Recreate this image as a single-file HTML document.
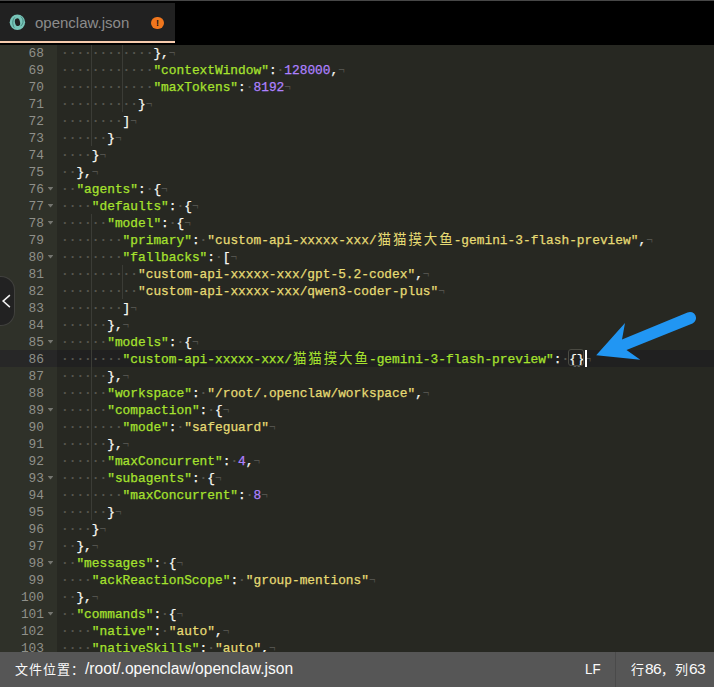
<!DOCTYPE html>
<html lang="zh-CN">
<head>
<meta charset="utf-8">
<title>openclaw.json</title>
<style>
*{box-sizing:border-box;margin:0;padding:0}
html,body{width:714px;height:687px;overflow:hidden;background:#272822}
body{position:relative;font-family:"Liberation Sans","Noto Sans CJK SC",sans-serif}
#tabs{position:absolute;left:0;top:0;width:714px;height:45px;background:#000;border-top:1px solid #474747;z-index:5}
#tab{position:absolute;left:0;top:2px;width:175px;height:40px;background:#212121;border-bottom:2px solid #f7ccae}
#tab .ico{position:absolute;left:9px;top:11px;width:17px;height:17px;overflow:visible}
#tab .name{position:absolute;left:35px;top:1px;height:38px;line-height:38px;font-size:15px;color:#8c8c8c;white-space:nowrap}
#tab .warn{position:absolute;left:151.1px;top:13.6px;width:12.6px;height:12.6px;border-radius:50%;background:#f0761d;color:#161616;font-size:9px;font-weight:bold;line-height:12.6px;text-align:center}
#ed{position:absolute;left:0;top:44px;width:714px;height:608px;background:#272822;overflow:hidden;font-family:"Liberation Mono","Noto Sans CJK SC",monospace;font-size:12.83px;line-height:19px}
#gut{position:absolute;left:0;top:0;width:57px;height:608px;background:#2f3129;color:#8f908a}
.gl{position:relative;height:17px;overflow:hidden;padding-right:13px;text-align:right;white-space:pre}
.gl.act{background:#272727}
.fw{position:absolute;left:47.6px;top:7px;width:5.8px;height:3.5px;background:#74756f;clip-path:polygon(0 0,100% 0,50% 100%)}
#code{position:absolute;left:57px;top:0;width:657px;height:608px;color:#f8f8f2}
.cl{height:17px;overflow:hidden;padding-left:4px;white-space:pre}
.cl.act{background:#202020}
.cl span{display:inline-block;height:19px;vertical-align:top}
.iv{color:#56564f;font-weight:bold}
.eol{color:#52524d;font-size:11px}
.ig{box-shadow:inset -1px 0 0 #3b3c36}
.k,.s,.n,.p{-webkit-text-stroke:.25px}
.k{color:#a6e22e}
.s{color:#e6db74}
.n{color:#ae81ff}
.p{color:#f8f8f2}
.cl .cj{width:77px;letter-spacing:1.9px;text-indent:.95px;overflow:hidden;font-family:"Liberation Mono","Noto Sans CJK SC",monospace;font-size:13.5px;font-weight:400;-webkit-text-stroke:0}
#cursor{position:absolute;left:585px;top:306px;width:2px;height:17px;background:#fff}
.br{position:absolute;top:305px;height:17px;border:1px solid #4b4b43;border-radius:3px}
#handle{position:absolute;left:-1px;top:276px;width:16px;height:50px;background:#222;border:1px solid #41413e;border-left:none;border-radius:0 14px 14px 0;z-index:6}
#handle svg{position:absolute;left:2px;top:17px}
#arrow{position:absolute;left:0;top:0;width:714px;height:687px;pointer-events:none}
#status{position:absolute;left:0;top:652px;width:714px;height:35px;background:#565656;color:#fafafa;font-size:13px;letter-spacing:1px;line-height:34px;white-space:nowrap}
#status .path{position:absolute;left:15px;top:0}
#status .lf{position:absolute;left:585px;top:0;letter-spacing:0;font-size:15.5px;transform:scaleX(.86);transform-origin:0 50%}
#status .dg{font-size:15.5px;letter-spacing:-.6px}
#status .lt{font-size:15.6px;letter-spacing:0}
#status .sep{position:absolute;left:615px;top:0;width:1px;height:35px;background:#4a4a4a}
#status .pos{position:absolute;left:631px;top:0}
</style>
</head>
<body>
<div id="tabs">
  <div id="tab">
    <svg class="ico" viewBox="0 0 17 17"><circle cx="8.4" cy="8.3" r="7.7" fill="#78c5b9"/><ellipse cx="8.5" cy="8.2" rx="2.55" ry="3.9" fill="#212121" transform="rotate(-12 8.5 8.2)"/><path d="M5.8 3.4 C3.3 5.6 3.1 10.6 5.3 13.6" fill="none" stroke="#2b6a61" stroke-opacity=".75" stroke-width=".9"/><path d="M11.6 2.4 C14.8 4.6 15 9.4 11.6 12.2" fill="none" stroke="#2b6a61" stroke-opacity=".75" stroke-width=".9"/></svg>
    <span class="name">openclaw.json</span>
    <span class="warn">!</span>
  </div>
</div>
<div id="ed">
  <div id="gut">
<div class="gl">68</div>
<div class="gl">69</div>
<div class="gl">70</div>
<div class="gl">71</div>
<div class="gl">72</div>
<div class="gl">73</div>
<div class="gl">74</div>
<div class="gl">75</div>
<div class="gl">76<i class="fw"></i></div>
<div class="gl">77<i class="fw"></i></div>
<div class="gl">78<i class="fw"></i></div>
<div class="gl">79</div>
<div class="gl">80<i class="fw"></i></div>
<div class="gl">81</div>
<div class="gl">82</div>
<div class="gl">83</div>
<div class="gl">84</div>
<div class="gl">85<i class="fw"></i></div>
<div class="gl act">86</div>
<div class="gl">87</div>
<div class="gl">88</div>
<div class="gl">89<i class="fw"></i></div>
<div class="gl">90</div>
<div class="gl">91</div>
<div class="gl">92</div>
<div class="gl">93<i class="fw"></i></div>
<div class="gl">94</div>
<div class="gl">95</div>
<div class="gl">96</div>
<div class="gl">97</div>
<div class="gl">98<i class="fw"></i></div>
<div class="gl">99</div>
<div class="gl">100</div>
<div class="gl">101<i class="fw"></i></div>
<div class="gl">102</div>
<div class="gl">103</div>
  </div>
  <div id="code">
<div class="cl"><span class="iv ig">····</span><span class="iv ig">····</span><span class="iv">····</span><span class="p">},</span><span class="eol">¬</span></div>
<div class="cl"><span class="iv ig">····</span><span class="iv ig">····</span><span class="iv">····</span><span class="k">"contextWindow"</span><span class="p">:</span><span class="iv">·</span><span class="n">128000</span><span class="p">,</span><span class="eol">¬</span></div>
<div class="cl"><span class="iv ig">····</span><span class="iv ig">····</span><span class="iv">····</span><span class="k">"maxTokens"</span><span class="p">:</span><span class="iv">·</span><span class="n">8192</span><span class="eol">¬</span></div>
<div class="cl"><span class="iv ig">····</span><span class="iv ig">····</span><span class="iv">··</span><span class="p">}</span><span class="eol">¬</span></div>
<div class="cl"><span class="iv ig">····</span><span class="iv">····</span><span class="p">]</span><span class="eol">¬</span></div>
<div class="cl"><span class="iv ig">····</span><span class="iv">··</span><span class="p">}</span><span class="eol">¬</span></div>
<div class="cl"><span class="iv">····</span><span class="p">}</span><span class="eol">¬</span></div>
<div class="cl"><span class="iv">··</span><span class="p">},</span><span class="eol">¬</span></div>
<div class="cl"><span class="iv">··</span><span class="k">"agents"</span><span class="p">:</span><span class="iv">·</span><span class="p">{</span><span class="eol">¬</span></div>
<div class="cl"><span class="iv">····</span><span class="k">"defaults"</span><span class="p">:</span><span class="iv">·</span><span class="p">{</span><span class="eol">¬</span></div>
<div class="cl"><span class="iv ig">····</span><span class="iv">··</span><span class="k">"model"</span><span class="p">:</span><span class="iv">·</span><span class="p">{</span><span class="eol">¬</span></div>
<div class="cl"><span class="iv ig">····</span><span class="iv">····</span><span class="k">"primary"</span><span class="p">:</span><span class="iv">·</span><span class="s">"custom-api-xxxxx-xxx/<span class="cj">猫猫摸大鱼</span>-gemini-3-flash-preview"</span><span class="p">,</span><span class="eol">¬</span></div>
<div class="cl"><span class="iv ig">····</span><span class="iv">····</span><span class="k">"fallbacks"</span><span class="p">:</span><span class="iv">·</span><span class="p">[</span><span class="eol">¬</span></div>
<div class="cl"><span class="iv ig">····</span><span class="iv ig">····</span><span class="iv">··</span><span class="s">"custom-api-xxxxx-xxx/gpt-5.2-codex"</span><span class="p">,</span><span class="eol">¬</span></div>
<div class="cl"><span class="iv ig">····</span><span class="iv ig">····</span><span class="iv">··</span><span class="s">"custom-api-xxxxx-xxx/qwen3-coder-plus"</span><span class="eol">¬</span></div>
<div class="cl"><span class="iv ig">····</span><span class="iv">····</span><span class="p">]</span><span class="eol">¬</span></div>
<div class="cl"><span class="iv ig">····</span><span class="iv">··</span><span class="p">},</span><span class="eol">¬</span></div>
<div class="cl"><span class="iv ig">····</span><span class="iv">··</span><span class="k">"models"</span><span class="p">:</span><span class="iv">·</span><span class="p">{</span><span class="eol">¬</span></div>
<div class="cl act"><span class="iv ig">····</span><span class="iv">····</span><span class="k">"custom-api-xxxxx-xxx/<span class="cj">猫猫摸大鱼</span>-gemini-3-flash-preview"</span><span class="p">:</span><span class="iv">·</span><span class="p">{}</span><span class="eol">¬</span></div>
<div class="cl"><span class="iv ig">····</span><span class="iv">··</span><span class="p">},</span><span class="eol">¬</span></div>
<div class="cl"><span class="iv ig">····</span><span class="iv">··</span><span class="k">"workspace"</span><span class="p">:</span><span class="iv">·</span><span class="s">"/root/.openclaw/workspace"</span><span class="p">,</span><span class="eol">¬</span></div>
<div class="cl"><span class="iv ig">····</span><span class="iv">··</span><span class="k">"compaction"</span><span class="p">:</span><span class="iv">·</span><span class="p">{</span><span class="eol">¬</span></div>
<div class="cl"><span class="iv ig">····</span><span class="iv">····</span><span class="k">"mode"</span><span class="p">:</span><span class="iv">·</span><span class="s">"safeguard"</span><span class="eol">¬</span></div>
<div class="cl"><span class="iv ig">····</span><span class="iv">··</span><span class="p">},</span><span class="eol">¬</span></div>
<div class="cl"><span class="iv ig">····</span><span class="iv">··</span><span class="k">"maxConcurrent"</span><span class="p">:</span><span class="iv">·</span><span class="n">4</span><span class="p">,</span><span class="eol">¬</span></div>
<div class="cl"><span class="iv ig">····</span><span class="iv">··</span><span class="k">"subagents"</span><span class="p">:</span><span class="iv">·</span><span class="p">{</span><span class="eol">¬</span></div>
<div class="cl"><span class="iv ig">····</span><span class="iv">····</span><span class="k">"maxConcurrent"</span><span class="p">:</span><span class="iv">·</span><span class="n">8</span><span class="eol">¬</span></div>
<div class="cl"><span class="iv ig">····</span><span class="iv">··</span><span class="p">}</span><span class="eol">¬</span></div>
<div class="cl"><span class="iv">····</span><span class="p">}</span><span class="eol">¬</span></div>
<div class="cl"><span class="iv">··</span><span class="p">},</span><span class="eol">¬</span></div>
<div class="cl"><span class="iv">··</span><span class="k">"messages"</span><span class="p">:</span><span class="iv">·</span><span class="p">{</span><span class="eol">¬</span></div>
<div class="cl"><span class="iv">····</span><span class="k">"ackReactionScope"</span><span class="p">:</span><span class="iv">·</span><span class="s">"group-mentions"</span><span class="eol">¬</span></div>
<div class="cl"><span class="iv">··</span><span class="p">},</span><span class="eol">¬</span></div>
<div class="cl"><span class="iv">··</span><span class="k">"commands"</span><span class="p">:</span><span class="iv">·</span><span class="p">{</span><span class="eol">¬</span></div>
<div class="cl"><span class="iv">····</span><span class="k">"native"</span><span class="p">:</span><span class="iv">·</span><span class="s">"auto"</span><span class="p">,</span><span class="eol">¬</span></div>
<div class="cl"><span class="iv">····</span><span class="k">"nativeSkills"</span><span class="p">:</span><span class="iv">·</span><span class="s">"auto"</span><span class="p">,</span><span class="eol">¬</span></div>
  </div>
  <div class="br" style="left:568px;width:16px"></div>
  <div id="cursor"></div>
</div>
<div id="handle"><svg width="10" height="15" viewBox="0 0 10 15"><path d="M8.9 1.1 L2.1 7.1 L8.9 13.1" fill="none" stroke="#f2f2f2" stroke-width="1.5"/></svg></div>
<svg id="arrow" viewBox="0 0 714 687"><path d="M596.2 355.2 L625 323 L622 339.4 L687.5 312.5 A6 6 0 0 1 692.5 323.5 L626.5 350 L640.3 359.8 Z" fill="#2196f3"/></svg>
<div id="status">
  <span class="path">文件位置：<span class="lt">/root/.openclaw/openclaw.json</span></span>
  <span class="lf">LF</span>
  <span class="sep"></span>
  <span class="pos">行<span class="dg">86</span>，列<span class="dg">63</span></span>
</div>
</body>
</html>
